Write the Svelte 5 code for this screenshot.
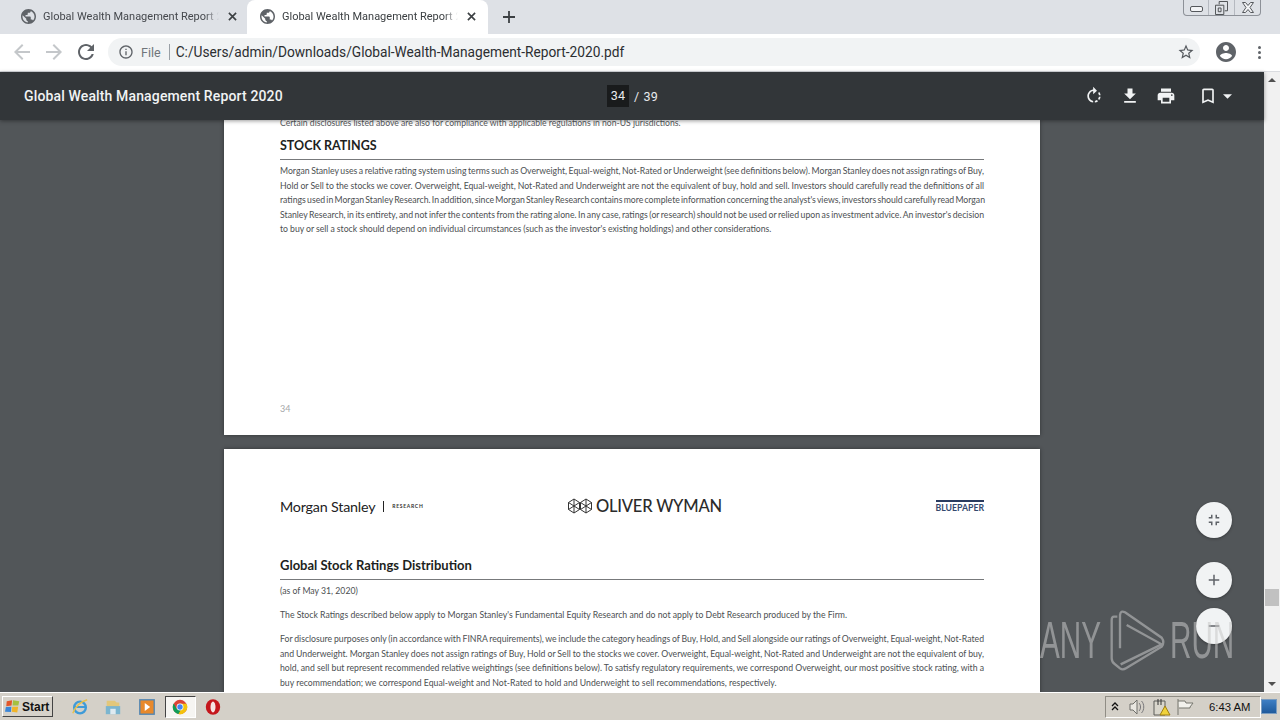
<script>
  const globe = "M12 2C6.48 2 2 6.48 2 12s4.48 10 10 10 10-4.48 10-10S17.52 2 12 2zm-1 17.93c-3.95-.49-7-3.85-7-7.93 0-.62.08-1.21.21-1.79L9 15v1c0 1.1.9 2 2 2v1.93zm6.9-2.54c-.26-.81-1-1.39-1.9-1.39h-1v-3c0-.55-.45-1-1-1H8v-2h2c.55 0 1-.45 1-1V7h2c1.1 0 2-.9 2-2v-.41c2.93 1.19 5 4.06 5 7.41 0 2.08-.8 3.97-2.1 5.39z";
  const tabs = [{ active: false }, { active: true }];
  const ratings = [
    "Morgan Stanley uses a relative rating system using terms such as Overweight, Equal-weight, Not-Rated or Underweight (see definitions below). Morgan Stanley does not assign ratings of Buy,",
    "Hold or Sell to the stocks we cover. Overweight, Equal-weight, Not-Rated and Underweight are not the equivalent of buy, hold and sell. Investors should carefully read the definitions of all",
    "ratings used in Morgan Stanley Research. In addition, since Morgan Stanley Research contains more complete information concerning the analyst's views, investors should carefully read Morgan",
    "Stanley Research, in its entirety, and not infer the contents from the rating alone. In any case, ratings (or research) should not be used or relied upon as investment advice. An investor's decision"
  ];
  const disclosure = [
    "For disclosure purposes only (in accordance with FINRA requirements), we include the category headings of Buy, Hold, and Sell alongside our ratings of Overweight, Equal-weight, Not-Rated",
    "and Underweight. Morgan Stanley does not assign ratings of Buy, Hold or Sell to the stocks we cover. Overweight, Equal-weight, Not-Rated and Underweight are not the equivalent of buy,",
    "hold, and sell but represent recommended relative weightings (see definitions below). To satisfy regulatory requirements, we correspond Overweight, our most positive stock rating, with a"
  ];
</script>

<div class="app">
  <div class="tabs">
    {#each tabs as t}
      <div class="tab" class:active={t.active}>
        <svg class="globe" viewBox="2 2 20 20"><path d={globe} /></svg>
        <span class="tab-title">Global Wealth Management Report 2</span>
        <svg class="tab-x" viewBox="0 0 10 10"><path d="M1 1l8 8M9 1l-8 8" /></svg>
      </div>
    {/each}
    <svg class="plus" viewBox="0 0 12 12"><path d="M6 0v12M0 6h12" /></svg>
    <div class="winctl">
      <div class="wc wc1"><span class="min"></span></div>
      <div class="wc wc2">
        <svg viewBox="0 0 14 15"><path d="M4.500 3.500v-3h9v10h-3M.5 4.500h9v10h-9zM3.500 7.500h3v4h-3z" /></svg>
      </div>
      <div class="wc wc3">
        <svg viewBox="0 0 12 11"><path d="M.5.5h3L6 3.500 8.500.5h3L8 5.500l3.500 5h-3L6 7.500l-2.500 3h-3L4 5.500z" /></svg>
      </div>
    </div>
  </div>

  <div class="toolbar">
    <svg class="nav dim" viewBox="0 0 24 24"><path d="M20 11H7.830l5.590-5.590L12 4l-8 8 8 8 1.410-1.410L7.830 13H20z" /></svg>
    <svg class="nav dim" viewBox="0 0 24 24"><path d="M12 4l-1.410 1.410L16.170 11H4v2h12.170l-5.580 5.590L12 20l8-8z" /></svg>
    <svg class="nav" viewBox="0 0 24 24"><path d="M17.650 6.350C16.200 4.900 14.210 4 12 4c-4.420 0-7.990 3.580-7.990 8s3.570 8 7.990 8c3.730 0 6.840-2.550 7.730-6h-2.080c-.82 2.330-3.040 4-5.650 4-3.310 0-6-2.690-6-6s2.690-6 6-6c1.660 0 3.140.69 4.220 1.780L13 11h7V4l-2.350 2.350z" /></svg>
    <div class="omni">
      <svg class="info" viewBox="0 0 24 24"><path d="M11 7h2v2h-2zm0 4h2v6h-2zm1-9C6.480 2 2 6.480 2 12s4.480 10 10 10 10-4.480 10-10S17.520 2 12 2zm0 18c-4.410 0-8-3.590-8-8s3.590-8 8-8 8 3.590 8 8-3.590 8-8 8z" /></svg>
      <span class="file">File</span>
      <span class="sep"></span>
      <span class="url">C:/Users/admin/Downloads/Global-Wealth-Management-Report-2020.pdf</span>
      <svg class="star" viewBox="0 0 24 24"><path d="M22 9.240l-7.190-.62L12 2 9.190 8.630 2 9.240l5.460 4.730L5.820 21 12 17.270 18.180 21l-1.630-7.030L22 9.240zM12 15.400l-3.760 2.270 1-4.280-3.320-2.880 4.380-.38L12 6.100l1.710 4.040 4.380.38-3.320 2.880 1 4.280L12 15.400z" /></svg>
    </div>
    <svg class="avatar" viewBox="2 2 20 20"><path d="M12 2C6.480 2 2 6.480 2 12s4.480 10 10 10 10-4.480 10-10S17.520 2 12 2zm0 3c1.660 0 3 1.340 3 3s-1.340 3-3 3-3-1.340-3-3 1.340-3 3-3zm0 14.200c-2.500 0-4.710-1.280-6-3.220.03-1.990 4-3.080 6-3.080 1.990 0 5.970 1.090 6 3.080-1.290 1.940-3.500 3.220-6 3.220z" /></svg>
    <div class="dots"><i></i><i></i><i></i></div>
  </div>

  <div class="viewer">
    <div class="pdf">
      <div class="pdfbar">
        <div class="pdf-title">Global Wealth Management Report 2020</div>
        <div class="pager"><span class="pageno">34</span><span class="pagesep">/</span><span>39</span></div>
        <div class="pdf-tools">
          <svg class="t-rot" viewBox="0 0 24 24"><path d="M15.550 5.550L11 1v3.070C7.060 4.560 4 7.920 4 12s3.050 7.440 7 7.930v-2.020c-2.840-.48-5-2.940-5-5.910s2.160-5.430 5-5.910V10l4.550-4.450zM19.930 11c-.17-1.390-.72-2.730-1.620-3.890l-1.420 1.420c.54.750.88 1.600 1.020 2.470h2.020zM13 17.900v2.020c1.390-.17 2.740-.71 3.900-1.610l-1.440-1.440c-.75.540-1.590.89-2.460 1.030zm3.890-2.420l1.420 1.410c.9-1.160 1.450-2.500 1.620-3.890h-2.020c-.14.870-.48 1.720-1.020 2.480z" /></svg>
          <svg class="t-dl" viewBox="0 0 24 24"><path d="M19 9h-4V3H9v6H5l7 7 7-7zM5 18v2h14v-2H5z" /></svg>
          <svg class="t-pr" viewBox="0 0 24 24"><path d="M19 8H5c-1.660 0-3 1.340-3 3v6h4v4h12v-4h4v-6c0-1.660-1.340-3-3-3zm-3 11H8v-5h8v5zm3-7c-.55 0-1-.45-1-1s.45-1 1-1 1 .45 1 1-.45 1-1 1zm-1-9H6v4h12V3z" /></svg>
          <svg class="t-bm" viewBox="0 0 24 24"><path d="M17 3H7c-1.100 0-2 .9-2 2v16l7-3 7 3V5c0-1.100-.9-2-2-2zm0 15l-5-2.180L7 18V5h10v13z" /></svg>
          <svg class="t-caret" viewBox="0 0 10 5"><path d="M0 0h10L5 5z" /></svg>
        </div>
      </div>

      <div class="doc">
        <div class="page first">
          <p class="lead">Certain disclosures listed above are also for compliance with applicable regulations in non-US jurisdictions.</p>
          <h2 class="stock">STOCK RATINGS</h2>
          <div class="body">
            {#each ratings as line}<div class="j">{line}</div>{/each}
            <div class="loose">to buy or sell a stock should depend on individual circumstances (such as the investor's existing holdings) and other considerations.</div>
          </div>
          <div class="folio">34</div>
        </div>

        <div class="page second">
          <div class="masthead">
            <div class="ms"><span class="ms-name">Morgan Stanley</span><span class="ms-bar"></span><span class="ms-res">RESEARCH</span></div>
            <div class="ow">
              <svg viewBox="0 0 24 16"><path d="M6 1l5.500 3.500v7L6 15 .5 11.500v-7zM18 1l5.500 3.500v7L18 15l-5.500-3.500v-7zM.5 4.500L6 8l5.500-3.500M6 1v14M.5 11.500L6 8l5.500 3.500M12.500 4.500L18 8l5.500-3.500M18 1v14M12.500 11.500L18 8l5.500 3.500" /></svg>
              <span>OLIVER WYMAN</span>
            </div>
            <div class="blue">BLUEPAPER</div>
          </div>
          <h2 class="global">Global Stock Ratings Distribution</h2>
          <div class="body">
            <div class="asof">(as of May 31, 2020)</div>
            <div class="intro">The Stock Ratings described below apply to Morgan Stanley's Fundamental Equity Research and do not apply to Debt Research produced by the Firm.</div>
            {#each disclosure as line}<div class="j">{line}</div>{/each}
            <div>buy recommendation; we correspond Equal-weight and Not-Rated to hold and Underweight to sell recommendations, respectively.</div>
          </div>
        </div>

        <div class="fab fab-fit"><svg viewBox="0 0 24 24"><path d="M5 16h3v3h2v-5H5v2zm3-8H5v2h5V5H8v3zm6 11h2v-3h3v-2h-5v5zm2-11V5h-2v5h5V8h-3z" /></svg></div>
        <div class="fab fab-plus"><svg viewBox="0 0 24 24"><path d="M19 13h-6v6h-2v-6H5v-2h6V5h2v6h6z" /></svg></div>
        <div class="fab fab-minus"><svg viewBox="0 0 24 24"><path d="M19 13H5v-2h14z" /></svg></div>

        <div class="mark">
          <span class="mark-t">ANY</span>
          <svg viewBox="0 0 225 210"><path d="M52 35H42Q35 35 35 45V160Q35 172 45 178L60 190Q68 196 78 190L185 125Q195 112 185 98L75 22Q62 15 60 30V130" /><path d="M80 60L185 118L62 178" /></svg>
          <span class="mark-t">RUN</span>
        </div>
      </div>
    </div>

    <div class="scroll">
      <div class="arrow up"></div>
      <div class="thumb"></div>
      <div class="arrow down"></div>
    </div>
  </div>

  <div class="taskbar">
    <div class="start">
      <svg viewBox="0 0 18 16">
        <path fill="#e2572b" d="M2 2l6-1-.6 6-6 .6z" />
        <path fill="#a5c040" d="M9 1l7 1-1 5-6.500 0z" />
        <path fill="#3b86d8" d="M1 8.500l6.200-.3-.5 6L0 14z" />
        <path fill="#f0b429" d="M8.200 8.300l6.600 0-1 6.400-6.200-.8z" />
      </svg>
      <span>Start</span>
    </div>
    <div class="apps">
      <div class="app-ico">
        <svg viewBox="0 0 20 20"><circle cx="10" cy="10.500" r="6.500" fill="none" stroke="#3f9bd8" stroke-width="2.600" /><path d="M4 10h12" stroke="#3f9bd8" stroke-width="2.200" /><path d="M2 17c3-8 9-13 16-15" fill="none" stroke="#e9c04a" stroke-width="1.600" /></svg>
      </div>
      <div class="app-ico">
        <svg viewBox="0 0 20 20"><path fill="#e3c77a" d="M3 3h9l2 2h3v6H3z" /><path fill="#7cb5cf" d="M2 9h16v9H2z" /><path fill="#dfeaf0" d="M7 12h6v6H7z" /></svg>
      </div>
      <div class="app-ico">
        <svg viewBox="0 0 20 20"><rect x="2" y="2" width="16" height="16" fill="#e8892b" stroke="#4f86b4" stroke-width="1.500" /><path fill="#fff" d="M7.500 5.500l6 4.500-6 4.500z" /></svg>
      </div>
      <div class="app-ico current">
        <svg viewBox="0 0 20 20">
          <circle cx="10" cy="10" r="8" fill="#db4437" />
          <path fill="#f4c20d" d="M10 6.500h7.200A8 8 0 0 1 8 17.800L11.500 12z" />
          <path fill="#0f9d58" d="M3 6a8 8 0 0 0 5.200 11.800l3.400-5.800-5 .5z" />
          <circle cx="10" cy="10" r="3.800" fill="#fff" /><circle cx="10" cy="10" r="3" fill="#4285f4" />
        </svg>
      </div>
      <div class="app-ico">
        <svg viewBox="0 0 20 20"><ellipse cx="10" cy="10" rx="8" ry="8.500" fill="#c4161c" /><ellipse cx="10" cy="10" rx="2.800" ry="6" fill="#f6e3e3" /></svg>
      </div>
    </div>
    <div class="tray">
      <svg class="chev" viewBox="0 0 8 9"><path d="M1 4l3-3 3 3M1 8l3-3 3 3" /></svg>
      <svg class="spk" viewBox="0 0 18 18"><path fill="#e9e7e1" stroke="#6f6f6a" d="M2 6h3l4-4v14l-4-4H2z" /><path fill="none" stroke="#77777a" d="M11 5c2 2 2 6 0 8M13.500 3c3 3 3 9 0 12" /></svg>
      <svg class="pwr" viewBox="0 0 18 18"><path fill="#d9d6cc" stroke="#5c5c58" d="M1 3h11v14H1z" /><path fill="#f0d23a" stroke="#a07f10" d="M12 8l5 9H7z" /><path stroke="#333" d="M5 1v6M8 1v6" /></svg>
      <svg class="flag" viewBox="0 0 18 18"><path fill="#f2f1ec" stroke="#77776f" d="M2 1v16M2 3h7l1 2h7l-3 4 0 1H3" /></svg>
      <span class="clock">6:43 AM</span>
    </div>
    <div class="desk"></div>
  </div>
</div>

<style>
  :global(body) { margin: 0; }
  p, h2 { margin: 0; }
  svg { display: block; flex: none; }

  .app {
    width: 1280px; height: 720px; overflow: hidden;
    display: flex; flex-direction: column;
    font-family: Roboto, sans-serif;
  }

  /* tab strip */
  .tabs {
    height: 34px; flex: none; background: #dee1e6;
    display: flex; align-items: flex-end; padding-left: 8px; position: relative;
  }
  .tab {
    width: 241px; height: 34px; box-sizing: border-box;
    display: flex; align-items: center; padding: 0 0 1px 13px;
    color: #45484d; font-size: 11px;
  }
  .tab.active { background: #fff; border-radius: 8px 8px 0 0; color: #3c4043; margin-left: -2px; }
  .globe { width: 15px; height: 15px; fill: #5f6368; margin: 0 7px 0 0; }
  .tab-title {
    width: 176px; white-space: nowrap; flex: none;
    -webkit-mask-image: linear-gradient(90deg, #000 92%, transparent);
    mask-image: linear-gradient(90deg, #000 92%, transparent);
  }
  .tab-x { width: 9px; height: 9px; margin-left: 9px; stroke: #3c4043; stroke-width: 1.800; }
  .plus { width: 12px; height: 12px; stroke: #3c4043; stroke-width: 1.800; margin: 0 0 11px 15px; }

  .winctl {
    position: absolute; top: 0; left: 1183px; width: 78px; height: 16px; box-sizing: border-box;
    display: flex; border: 1px solid #8d9198; border-top: 0; border-radius: 0 0 4px 4px;
  }
  .wc { display: flex; align-items: center; justify-content: center; }
  .wc1 { width: 24px; }
  .wc2 { width: 25px; border-left: 1px solid #b5b9c0; border-right: 1px solid #b5b9c0; }
  .wc3 { flex: 1; }
  .min { width: 11px; height: 4px; border: 1px solid #55585c; border-radius: 2px; background: #f3f4f6; margin-top: 3px; }
  .wc2 svg { width: 13px; height: 14px; fill: none; stroke: #45484c; }
  .wc3 svg { width: 12px; height: 11px; fill: #f3f4f6; stroke: #55585c; }

  /* address row */
  .toolbar {
    height: 38px; flex: none; box-sizing: border-box; background: #fff;
    border-bottom: 1px solid #dadce0;
    display: flex; align-items: center; padding: 0 0 1px 10px;
  }
  .nav { width: 24px; height: 24px; fill: #5f6368; margin-right: 8px; }
  .nav.dim { fill: #c4c7ca; }
  .omni {
    width: 1092px; height: 28px; margin-left: 2px; border-radius: 14px; background: #f1f3f4;
    display: flex; align-items: center; padding-left: 10px; box-sizing: border-box;
  }
  .info { width: 16px; height: 16px; fill: #5f6368; }
  .file { font-size: 12.500px; color: #70757a; margin-left: 7px; }
  .sep { width: 1px; height: 16px; background: #9aa0a6; margin: 0 6px 0 8px; }
  .url { font-size: 13.730px; color: #2b2e31; white-space: nowrap; flex: 1; }
  .star { width: 18px; height: 18px; fill: #55595e; margin-right: 5px; }
  .avatar { width: 20px; height: 20px; fill: #5f6368; margin-left: 16px; }
  .dots { display: flex; flex-direction: column; gap: 2px; margin-left: 22px; }
  .dots i { width: 3px; height: 3px; border-radius: 50%; background: #5f6368; display: block; }

  /* viewer */
  .viewer { flex: 1; min-height: 0; display: flex; }
  .pdf { flex: 1; min-width: 0; display: flex; flex-direction: column; background: #525659; }
  .pdfbar {
    height: 48px; flex: none; background: #323639; color: #f1f3f4; position: relative; z-index: 2;
    display: flex; align-items: center; padding: 0 0 0 24px;
    box-shadow: 0 1px 4px rgba(0, 0, 0, .4);
  }
  .pdf-title { font-size: 14px; font-weight: 500; width: 583px; white-space: nowrap; letter-spacing: .14px; }
  .pager { display: flex; align-items: center; font-size: 12.500px; color: #e8eaed; letter-spacing: .3px; }
  .pageno { width: 22px; height: 22px; line-height: 22px; background: #191b1c; text-align: center; }
  .pagesep { margin: 0 4px 0 5px; }
  .pdf-tools { display: flex; align-items: center; margin-left: auto; padding-right: 32px; }
  .pdf-tools svg { width: 20px; height: 20px; fill: #f1f3f4; }
  .t-dl, .t-pr { margin-left: 16px; }
  .pdf-tools .t-bm { margin-left: 22px; }
  .pdf-tools .t-caret { width: 9px; height: 5px; margin-left: 5px; }

  .doc { flex: 1; min-height: 0; overflow: hidden; position: relative; display: flex; flex-direction: column; align-items: center; gap: 14px; }
  .page {
    width: 816px; flex: none; background: #fff; box-sizing: border-box; padding: 0 56px;
    color: #4c4f52; box-shadow: 0 0 4px rgba(0, 0, 0, .4);
    font-family: Lato, sans-serif; position: relative;
  }
  .first { height: 315px; }
  .second { height: 260px; }
  .lead { font-size: 8.650px; line-height: 12px; height: 12px; margin-top: -3px; white-space: nowrap; color: #55585b; }
  h2 { color: #1d1f21; font-weight: 700; border-bottom: 1px solid #77797b; }
  .stock { font-size: 12.500px; line-height: 17px; margin-top: 8px; padding: 0 0 5px; }
  .global { font-size: 13px; line-height: 17px; margin-top: 42px; padding: 0 0 5px; }
  .body { font-size: 8.700px; line-height: 14.500px; white-space: nowrap; margin-top: 4px; }
  .j { text-align: justify; text-align-last: justify; word-spacing: -1px; }
  .loose { letter-spacing: 0; word-spacing: -.2px; }
  .folio { position: absolute; left: 56px; top: 283px; font-size: 9px; color: #a5a7a9; }

  .masthead { display: flex; align-items: center; height: 18px; padding-top: 48px; }
  .ms { display: flex; align-items: center; width: 288px; }
  .ms-name { font-size: 14.300px; color: #222; letter-spacing: -.2px; font-weight: 400; }
  .ms-bar { width: 1px; height: 11px; background: #222; margin: 0 8px 0 8px; }
  .ms-res { font-size: 5px; font-weight: 700; letter-spacing: .7px; color: #333; }
  .ow { display: flex; align-items: center; gap: 4px; color: #2b2b2b; font-size: 16.500px; font-weight: 500; letter-spacing: -.2px; }
  .ow svg { width: 24px; height: 16px; fill: none; stroke: #333; stroke-width: 1; }
  .blue { margin-left: auto; font-size: 8.700px; font-weight: 700; color: #34496e; border-top: 2px solid #2a3c5f; line-height: 10px; padding-top: 1px; }
  .intro { margin: 9.500px 0; }

  .fab {
    position: absolute; width: 36px; height: 36px; border-radius: 50%; left: 1196px; z-index: 1;
    background: #f1f3f4; display: flex; align-items: center; justify-content: center;
    box-shadow: 0 1px 3px rgba(0, 0, 0, .3);
  }
  .fab svg { width: 18px; height: 18px; fill: #5f6368; }
  .fab-fit { top: 382px; }
  .fab-plus { top: 442px; }
  .fab-minus { top: 488px; }

  .mark {
    position: absolute; left: 1040px; top: 485px; z-index: 3; height: 70px;
    display: flex; align-items: center;
    opacity: .55; color: #c8c8c8;
  }
  .mark-t { font-family: "Liberation Sans", sans-serif; font-size: 52px; width: 62px; display: block; transform: scaleX(.57); transform-origin: left center; white-space: nowrap; }
  .mark svg { width: 75px; height: 70px; fill: none; stroke: #c8c8c8; stroke-width: 7; margin: 0 -5px 0 -2px; }

  /* scrollbar */
  .scroll { width: 16px; flex: none; background: #f1f1f1; display: flex; flex-direction: column; align-items: center; position: relative; }
  .arrow { width: 0; height: 0; border-left: 4px solid transparent; border-right: 4px solid transparent; position: absolute; }
  .up { top: 6px; border-bottom: 4px solid #505050; }
  .down { bottom: 6px; border-top: 4px solid #505050; }
  .thumb { width: 14px; height: 17px; background: #c1c1c1; margin-top: 517px; }

  /* taskbar */
  .taskbar {
    height: 28px; flex: none; box-sizing: border-box; background: #d4d0c8;
    border-top: 1px solid #fff; display: flex; align-items: center; padding: 0 3px 0 2px;
  }
  .start {
    width: 51px; height: 21px; box-sizing: border-box; background: #d6d2ca;
    border: 1px solid; border-color: #fff #444 #444 #fff;
    display: flex; align-items: center; gap: 1px; padding-left: 2px;
    font: 700 12px "Liberation Sans", sans-serif; color: #111;
  }
  .start svg { width: 16px; height: 15px; }
  .apps { display: flex; align-items: center; margin-left: 10px; }
  .app-ico { width: 33.500px; height: 22px; display: flex; align-items: center; justify-content: center; box-sizing: border-box; }
  .app-ico svg { width: 18px; height: 18px; }
  .current { background: #f6f5f2; border: 1px solid; border-color: #444 #fff #fff #444; width: 31px; margin: 0 1px; }
  .tray {
    margin-left: auto; width: 156px; height: 22px; box-sizing: border-box;
    border: 1px solid; border-color: #908d85 #fff #fff #908d85;
    display: flex; align-items: center; padding-left: 5px;
  }
  .chev { width: 8px; height: 9px; fill: none; stroke: #111; stroke-width: 1.300; }
  .spk { width: 18px; height: 18px; margin-left: 9px; }
  .pwr { width: 18px; height: 18px; margin-left: 7px; }
  .flag { width: 18px; height: 18px; margin-left: 5px; }
  .clock { font: 11.300px "Liberation Sans", sans-serif; color: #111; margin-left: 15px; white-space: nowrap; }
  .desk { width: 16px; height: 15px; background: linear-gradient(#3f7fc4, #1f5a9c); border: 1px solid #7a9cc0; box-sizing: border-box; }
</style>
